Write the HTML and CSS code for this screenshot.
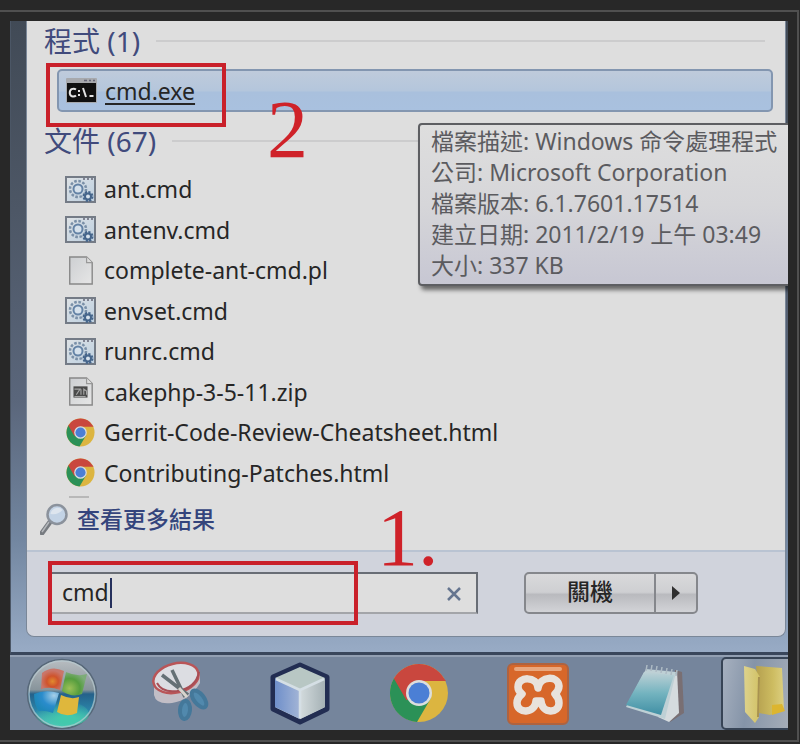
FILE: index.html
```html
<!DOCTYPE html>
<html lang="zh-Hant">
<head>
<meta charset="utf-8">
<meta name="viewport" content="width=device-width, initial-scale=1">
<title>cmd</title>
<link rel="stylesheet" href="styles.css">
</head>
<body>
<svg class="defs" aria-hidden="true">
  <defs>
    <linearGradient id="paper" x1="0" y1="0" x2="1" y2="1"><stop offset="0" stop-color="#cdcfd2"/><stop offset="1" stop-color="#e6e6e6"/></linearGradient>
    <linearGradient id="batchBg" x1="0" y1="0" x2="1" y2="1"><stop offset="0" stop-color="#dfe3e6"/><stop offset="1" stop-color="#bccfe0"/></linearGradient>
    <symbol id="batch" viewBox="0 0 31 27">
      <rect x="1" y="1" width="29" height="25" fill="url(#batchBg)" stroke="#747b86" stroke-width="2"/>
      <path d="M18 3h2M22 3h2M26 3h2" stroke="#667" stroke-width="1.5"/>
      <circle cx="13" cy="13" r="8" fill="none" stroke="#7a90a8" stroke-width="2.500" stroke-dasharray="2.6 1.6"/>
      <circle cx="13" cy="13" r="4.500" fill="#d5e1ec" stroke="#6483a6" stroke-width="2"/>
      <circle cx="23" cy="20.500" r="4.500" fill="none" stroke="#45658b" stroke-width="2" stroke-dasharray="2.200 1.300"/>
      <circle cx="23" cy="20.500" r="3" fill="#d5e1ec" stroke="#45658b" stroke-width="2"/>
    </symbol>
    <symbol id="page" viewBox="0 0 31 31">
      <path d="M4 1h18l6 6v23H4z" fill="url(#paper)" stroke="#888" stroke-width="1.500"/>
      <path d="M22 1v6h6" fill="#ddd" stroke="#999" stroke-width="1.300"/>
    </symbol>
    <symbol id="chrome" viewBox="0 0 60 60">
      <circle cx="30" cy="30" r="29" fill="#dcb540"/>
      <path d="M30 30 4.900 15.500A29 29 0 0 0 28 59L42 35z" fill="#2b9157"/>
      <path d="M30 30 17.400 37.200 4.900 15.500A29 29 0 0 1 55.100 15.500L57 18H30z" fill="#c9473e"/>
      <circle cx="30" cy="30" r="13" fill="#dcdedd"/>
      <circle cx="30" cy="30" r="10.500" fill="#4b7fd5"/>
    </symbol>
  </defs>
</svg>
<main class="frame">
  <div class="desktop">
    <section class="menu">
      <div class="panel">
        <div class="results">
          <h2 class="heading">程式 (1)</h2>
          <a class="program" href="#">
            <svg class="icon" viewBox="0 0 31 25"><rect width="31" height="25" rx="1" fill="#a7a9ad"/><path d="M18 2.500h3m2 0h2m2 0h2" stroke="#667" stroke-width="1.500"/><rect x="1" y="5" width="29" height="19" fill="#101010"/><path d="M10 11.500Q8 10 5.500 11.200 3.500 12.500 3.800 15.500 4.500 18.500 7 18.500 9 18.500 10 17.500M13 12v2M13 16v2M17 10l3 9M23.500 18h4" fill="none" stroke="#e4e4e4" stroke-width="2"/></svg>
            <span>cmd.exe</span>
          </a>
          <h2 class="heading">文件 (67)</h2>
          <ul class="files">
            <li><a href="#"><svg class="icon"><use href="#batch"/></svg>ant.cmd</a></li>
            <li><a href="#"><svg class="icon"><use href="#batch"/></svg>antenv.cmd</a></li>
            <li><a href="#"><svg class="icon"><use href="#page"/></svg>complete-ant-cmd.pl</a></li>
            <li><a href="#"><svg class="icon"><use href="#batch"/></svg>envset.cmd</a></li>
            <li><a href="#"><svg class="icon"><use href="#batch"/></svg>runrc.cmd</a></li>
            <li><a href="#"><svg class="icon" viewBox="0 0 31 31"><use href="#page"/><rect x="8" y="10" width="15" height="12" fill="#4b4b4b"/><path d="M9 13h6l-4 6M16 13v6M19 19v-6l3 2v4M9 21h12" fill="none" stroke="#a5a5a5" stroke-width="1.200"/></svg>cakephp-3-5-11.zip</a></li>
            <li><a href="#"><svg class="icon browser"><use href="#chrome"/></svg>Gerrit-Code-Review-Cheatsheet.html</a></li>
            <li><a href="#"><svg class="icon browser"><use href="#chrome"/></svg>Contributing-Patches.html</a></li>
          </ul>
          <div class="cut"></div>
          <a class="more" href="#">
            <svg viewBox="0 0 28 32"><path d="M10 19 2 30" stroke="#777b80" stroke-width="5" stroke-linecap="round"/><path d="M9 19 2 29" stroke="#b5b8bc" stroke-width="1.500"/><circle cx="17" cy="11.500" r="9.500" fill="#c3d3e5" stroke="#8b929c" stroke-width="2.500"/><path d="M10.500 11a7 7 0 0 1 12-4q-4 5-12 4z" fill="#dde5ee"/></svg>
            查看更多結果
          </a>
        </div>
        <form class="footer">
          <div class="search">
            <input type="text" aria-label="搜尋" value="cmd">
            <span class="caret"></span>
            <button class="clear" type="button" aria-label="清除"><svg viewBox="0 0 14 14"><path d="m1 1 12 12M13 1 1 13" stroke="#65758f" stroke-width="2.500"/></svg></button>
          </div>
          <div class="power">
            <button type="button">關機</button>
            <button type="button" class="arrow" aria-label="更多選項"><svg viewBox="0 0 8 14"><path d="m0 0 8 7-8 7z" fill="#303030"/></svg></button>
          </div>
        </form>
        <div class="mark mark-program"></div>
        <div class="mark mark-search"></div>
        <span class="step step-two">2</span>
        <span class="step step-one">1.</span>
      </div>
      <div class="tooltip" role="tooltip">
        <div>檔案描述: Windows 命令處理程式</div>
        <div>公司: Microsoft Corporation</div>
        <div>檔案版本: 6.1.7601.17514</div>
        <div>建立日期: 2011/2/19 上午 03:49</div>
        <div>大小: 337 KB</div>
      </div>
    </section>
    <nav class="taskbar">
      <button aria-label="開始">
        <svg viewBox="0 0 74 74">
          <defs>
            <linearGradient id="orb" x1="0" y1="0" x2="0" y2="1"><stop offset="0" stop-color="#b9bdc1"/><stop offset=".44" stop-color="#87949b"/><stop offset=".5" stop-color="#25618a"/><stop offset=".75" stop-color="#2b86aa"/><stop offset="1" stop-color="#65d5c9"/></linearGradient>
            <radialGradient id="red" cx=".5" cy=".6"><stop offset="0" stop-color="#e18a2e"/><stop offset=".5" stop-color="#cf532c"/><stop offset="1" stop-color="#c9766a"/></radialGradient>
            <radialGradient id="green" cx=".3" cy=".7" r=".7"><stop offset="0" stop-color="#9cc057"/><stop offset=".6" stop-color="#559d3e"/><stop offset="1" stop-color="#7dac78"/></radialGradient>
            <radialGradient id="blue" cx=".8" cy=".2" r=".8"><stop offset="0" stop-color="#a6cfe8"/><stop offset=".6" stop-color="#2a8ccc"/><stop offset="1" stop-color="#1e87b8"/></radialGradient>
            <radialGradient id="lime" cx=".6" cy=".7" r=".7"><stop offset=".2" stop-color="#42c9ac"/><stop offset="1" stop-color="#42c9ac" stop-opacity="0"/></radialGradient>
          </defs>
          <circle cx="37" cy="37" r="34.500" fill="url(#orb)" stroke="#576879" stroke-width="1.500"/>
          <ellipse cx="37" cy="57" rx="27" ry="13" fill="url(#lime)"/>
          <path d="M17 16q10-8 22-2l-4 19q-10-4-19-1z" fill="url(#red)"/>
          <path d="M41 15q11 5 21 2l-5 20q-10 4-20-3z" fill="url(#green)"/>
          <path d="M9 37q11-5 25-1l-6 20q-9-3-14-2-5-6-5-17z" fill="url(#blue)"/>
          <path d="M36 38q10 5 18 2l-2 16q-11 5-20-1z" fill="#dfb73c"/>
          <circle cx="37" cy="37" r="33" fill="none" stroke="#b8cbd0" stroke-width="1.500" opacity=".7"/>
        </svg>
      </button>
      <button aria-label="剪取工具">
        <svg viewBox="0 0 74 74">
          <path d="M10 24v14q2 10 18 8 18-3 28-20V16z" fill="#c2bec6"/>
          <ellipse cx="32" cy="21" rx="23" ry="14.500" transform="rotate(-14 32 21)" fill="#dcdde2" stroke="#b95558" stroke-width="2.500"/>
          <path d="M13 26Q18 36 33 34q19-3 22-19" fill="none" stroke="#a84e55" stroke-width="2"/>
          <path d="m18 18 26 20M28 13l13 27" stroke="#657075" stroke-width="3.500"/><path d="m35 31 8 9" stroke="#d8d4ce" stroke-width="3"/>
          <ellipse cx="55" cy="42" rx="5" ry="10" transform="rotate(-38 55 42)" fill="#5189ad" stroke="#44789a" stroke-width="4"/>
          <ellipse cx="41" cy="53" rx="5" ry="9" transform="rotate(5 41 53)" fill="#5189ad" stroke="#44789a" stroke-width="4"/>
        </svg>
      </button>
      <button aria-label="VirtualBox">
        <svg viewBox="0 0 74 74">
          <defs><linearGradient id="cubeL"><stop offset="0" stop-color="#6f8fca"/><stop offset="1" stop-color="#a3b5d6"/></linearGradient><linearGradient id="cubeR"><stop offset="0" stop-color="#d3dbdd"/><stop offset="1" stop-color="#a5b1b5"/></linearGradient></defs>
          <path d="M37 8 64 20v32L37 65 10 52V20z" fill="#b8c4ca" stroke="#222d52" stroke-width="5" stroke-linejoin="round"/>
          <path d="m12 21 25 12v29L12 50z" fill="url(#cubeL)"/><path d="M37 33 62 21v29L37 62z" fill="url(#cubeR)"/><path d="M37 10 62 21 37 33 12 21z" fill="#b8c7c4"/>
          <path d="m13 22 24 11 24-11M37 34v27" fill="none" stroke="#d5dfe5" stroke-width="2.500"/>
        </svg>
      </button>
      <button aria-label="Chrome"><svg viewBox="-7 -6 74 74"><use href="#chrome" width="60" height="60"/></svg></button>
      <button aria-label="XAMPP">
        <svg viewBox="0 0 74 74">
          <rect x="7" y="7" width="60" height="60" rx="5" fill="#d7672a" stroke="#ae6340" stroke-width="2"/>
          <rect x="13" y="10" width="48" height="4" rx="2" fill="#e9a77e"/>
          <path d="M37 31C36 19 17 19 17 30q0 4 4 7-5 4-5 9c0 11 18 11 19-2h5c1 13 18 13 18 2q0-5-4-9 4-4 4-8C57 18 39 19 37 31z" fill="none" stroke="#e8e2dc" stroke-width="7.500" stroke-linejoin="round"/>
        </svg>
      </button>
      <button aria-label="記事本">
        <svg viewBox="0 0 74 74">
          <defs><linearGradient id="note" x1=".4" y1="0" x2=".4" y2="1"><stop offset="0" stop-color="#bed1d6"/><stop offset=".5" stop-color="#73b3bf"/><stop offset="1" stop-color="#408fa4"/></linearGradient></defs>
          <path d="m55 13 7 2 2 41-14 9z" fill="#796f73"/><path d="m57 13 2 43-10 9-11-5z" fill="#d5dbde"/>
          <path d="M26 12 56 15 45 62 6 50z" fill="#bed0d5"/><path d="M24 15 54 18 41 58 6 48z" fill="url(#note)"/>
          <path d="m27 8-1 6m6-6-1 6m6-5-1 6m6-5-1 6m6-5-1 6m6-5-1 6m6-5-1 6" stroke="#adbac4" stroke-width="1.500"/>
        </svg>
      </button>
      <button class="active" aria-label="檔案總管">
        <svg viewBox="0 0 46 62">
          <defs><linearGradient id="fold"><stop offset="0" stop-color="#ddd28c"/><stop offset="1" stop-color="#d2c266"/></linearGradient><linearGradient id="inside"><stop offset="0" stop-color="#b5a04f"/><stop offset=".6" stop-color="#cdbc61"/><stop offset="1" stop-color="#dccf80"/></linearGradient></defs>
          <path d="m14 3 26 2 2 42-14 5-11-2z" fill="url(#inside)"/>
          <path d="m30 42 10-1 3 7-13 4z" fill="#dcb52f"/>
          <path d="m2 3 11 3 5 8-1 40-4 6L3 49z" fill="url(#fold)"/>
          <path d="m17 14-1 40" stroke="#a89250" stroke-width="2"/>
        </svg>
      </button>
    </nav>
  </div>
</main>
</body>
</html>
```
FILE: styles.css
```css
* { box-sizing: border-box; }
body {
  margin: 0;
  padding: 10px 0 0;
  background: #282828;
  color: #262626;
  font-family: "Noto Sans", "Noto Sans CJK TC", sans-serif;
  font-size: 23px;
}
.defs { position: absolute; width: 0; height: 0; }
a { color: inherit; text-decoration: none; }
button { padding: 0; border: 0; background: none; font: inherit; color: inherit; }

.frame {
  margin-right: 1px;
  padding: 9px 9px 10px 10px;
  border: solid #505050;
  border-width: 2px 2px 2px 0;
}
.desktop { position: relative; overflow: hidden; background: #75859c; }

.menu {
  position: relative;
  padding: 0 2px 15px 15px;
  border-left: 1px solid #4b5665;
  border-bottom: 3px solid #39465b;
  background: linear-gradient(#414a56, #4d5766 30%, #5a667b 60%, #7286a0 82%, #98abc5);
}
.panel {
  position: relative;
  border: 1px solid #7a8798;
  border-top: 0;
  border-radius: 0 0 8px 8px;
  background: #d0d3dc;
}
.results { padding: 0 12px 13px 15px; background: #dedede; border-bottom: 2px solid #b9c3d2; }
.heading {
  display: flex;
  align-items: center;
  gap: 16px;
  margin: 0;
  height: 48px;
  padding: 0 8px 8px 2px;
  color: #414b7c;
  font-size: 28px;
  font-weight: 400;
  line-height: 40px;
}
.heading::after { content: ""; flex: 1; height: 2px; background: #cccccd; }
.program {
  display: flex;
  align-items: center;
  gap: 8px;
  height: 43px;
  margin: 0 0 9px 15px;
  padding-left: 7px;
  border: 2px solid #8396b0;
  border-radius: 5px;
  background: linear-gradient(#bfcbdb, #b4c6dc 50%, #a9c0dd 55%, #a9c1df);
}
.program span { text-decoration: underline; text-decoration-thickness: 2px; text-underline-offset: 3px; }
.icon { flex: none; width: 31px; height: 27px; }
.icon.browser { padding: 0 1px; }
.files {
  display: grid;
  grid-auto-rows: 1fr;
  height: 324px;
  margin: 0;
  padding: 0 0 0 23px;
  list-style: none;
}
.files a { display: flex; align-items: center; gap: 8px; height: 100%; line-height: 40px; }
.files .icon { height: 29px; }
.cut { width: 20px; height: 2px; margin: 3px 0 3px 27px; background: #b8b8b8; }
.more { display: flex; align-items: center; gap: 9px; height: 36px; color: #34447c; font-weight: 500; line-height: 36px; }
.more svg { width: 28px; height: 32px; margin-left: -2px; }

.footer { display: flex; align-items: center; gap: 46px; padding: 20px 0 22px 23px; }
.search { position: relative; flex: 0 1 428px; }
.search input {
  display: block;
  width: 100%;
  height: 42px;
  padding: 0 40px 2px 10px;
  border: 2px solid #686d75;
  border-bottom-color: #a3a5a9;
  background: #dedede;
  color: #262626;
  font: inherit;
}
.caret { position: absolute; left: 60px; top: 6px; width: 2px; height: 30px; background: #25305c; }
.clear { position: absolute; right: 17px; top: 15px; width: 14px; height: 14px; }
.clear svg, .arrow svg { display: block; width: 100%; height: 14px; }
.power {
  display: flex;
  flex: 0 1 174px;
  height: 42px;
  border: 2px solid #85878c;
  border-radius: 5px;
  background: linear-gradient(#d9d9db, #cecfd2 48%, #b9babe 54%, #d2d3d7);
  font-size: 23px;
  font-weight: 500;
}
.power button { flex: 1; padding-bottom: 4px; line-height: 34px; }
.power .arrow { flex: 0 0 42px; padding: 0 16px; border-left: 2px solid #85878c; }

.mark { position: absolute; border: 4px solid #c9202a; pointer-events: none; }
.mark-program { left: 19px; top: 42px; width: 180px; height: 64px; }
.mark-search { left: 21px; top: 540px; width: 310px; height: 64px; }
.step { position: absolute; color: #cf2229; font-family: "Liberation Serif", serif; font-size: 82px; line-height: 82px; }
.step-two { left: 240px; top: 68px; }
.step-one { left: 350px; top: 476px; }

.tooltip {
  position: absolute;
  left: 407px;
  top: 102px;
  width: 380px;
  padding: 1px 0 3px 11px;
  border: 2px solid #5d5e62;
  border-radius: 4px;
  background: linear-gradient(#dedede, #d6d6d9 50%, #c7c7d3);
  box-shadow: 3px 4px 4px #0008;
  color: #5b5b5f;
  line-height: 31px;
  white-space: nowrap;
}

.taskbar {
  display: grid;
  grid-template-columns: repeat(6, 119px) 1fr;
  height: 75px;
  border-top: 2px solid #929fb2;
}
.taskbar button { display: flex; align-items: center; padding-left: 15px; }
.taskbar svg { flex: none; width: 74px; height: 74px; }
.taskbar .active {
  margin: 0 -6px 1px -3px;
  padding-left: 19px;
  border: 2px solid #374456;
  border-radius: 5px;
  background: linear-gradient(100deg, #a6b0bf, #8594a8 40%, #a8afb9);
}
.taskbar .active svg { width: 46px; height: 62px; }
```
